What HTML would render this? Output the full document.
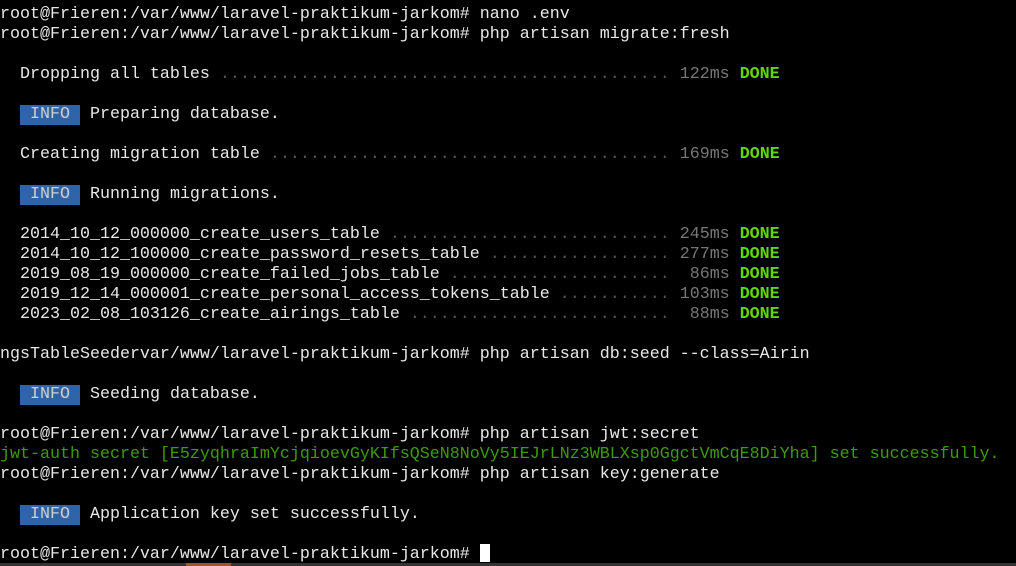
<!DOCTYPE html>
<html><head><meta charset="utf-8"><style>
html,body{margin:0;padding:0;background:#000;width:1016px;height:566px;overflow:hidden}
pre{margin:0;position:absolute;left:0;top:5px;font-family:"Liberation Mono",monospace;font-size:16.67px;line-height:20px;color:#e8e8e8;white-space:pre}
.d{color:#555}.t{color:#777}.ok{color:#5fd700;font-weight:bold}.g{color:#3e9a0a}
.i{background:#2f64a8;color:#d0d0d0;display:inline-block;height:20px}
#cur{position:absolute;left:480px;top:544px;width:10px;height:18px;background:#fff}
#bar{position:absolute;left:0;top:563px;width:1016px;height:3px;background:#333}
#bar i{position:absolute;left:186px;top:0;width:45px;height:3px;background:#a0522d}
</style></head><body>
<pre>root@Frieren:/var/www/laravel-praktikum-jarkom# nano .env
root@Frieren:/var/www/laravel-praktikum-jarkom# php artisan migrate:fresh

  Dropping all tables <span class="d">.............................................</span> <span class="t">122ms</span> <span class="ok">DONE</span>

  <span class="i"> INFO </span> Preparing database.

  Creating migration table <span class="d">........................................</span> <span class="t">169ms</span> <span class="ok">DONE</span>

  <span class="i"> INFO </span> Running migrations.

  2014_10_12_000000_create_users_table <span class="d">............................</span> <span class="t">245ms</span> <span class="ok">DONE</span>
  2014_10_12_100000_create_password_resets_table <span class="d">..................</span> <span class="t">277ms</span> <span class="ok">DONE</span>
  2019_08_19_000000_create_failed_jobs_table <span class="d">......................</span>  <span class="t">86ms</span> <span class="ok">DONE</span>
  2019_12_14_000001_create_personal_access_tokens_table <span class="d">...........</span> <span class="t">103ms</span> <span class="ok">DONE</span>
  2023_02_08_103126_create_airings_table <span class="d">..........................</span>  <span class="t">88ms</span> <span class="ok">DONE</span>

ngsTableSeedervar/www/laravel-praktikum-jarkom# php artisan db:seed --class=Airin

  <span class="i"> INFO </span> Seeding database.

root@Frieren:/var/www/laravel-praktikum-jarkom# php artisan jwt:secret
<span class="g">jwt-auth secret [E5zyqhraImYcjqioevGyKIfsQSeN8NoVy5IEJrLNz3WBLXsp0GgctVmCqE8DiYha] set successfully.</span>
root@Frieren:/var/www/laravel-praktikum-jarkom# php artisan key:generate

  <span class="i"> INFO </span> Application key set successfully.

root@Frieren:/var/www/laravel-praktikum-jarkom# </pre>
<div id="cur"></div>
<div id="bar"><i></i></div>
</body></html>
